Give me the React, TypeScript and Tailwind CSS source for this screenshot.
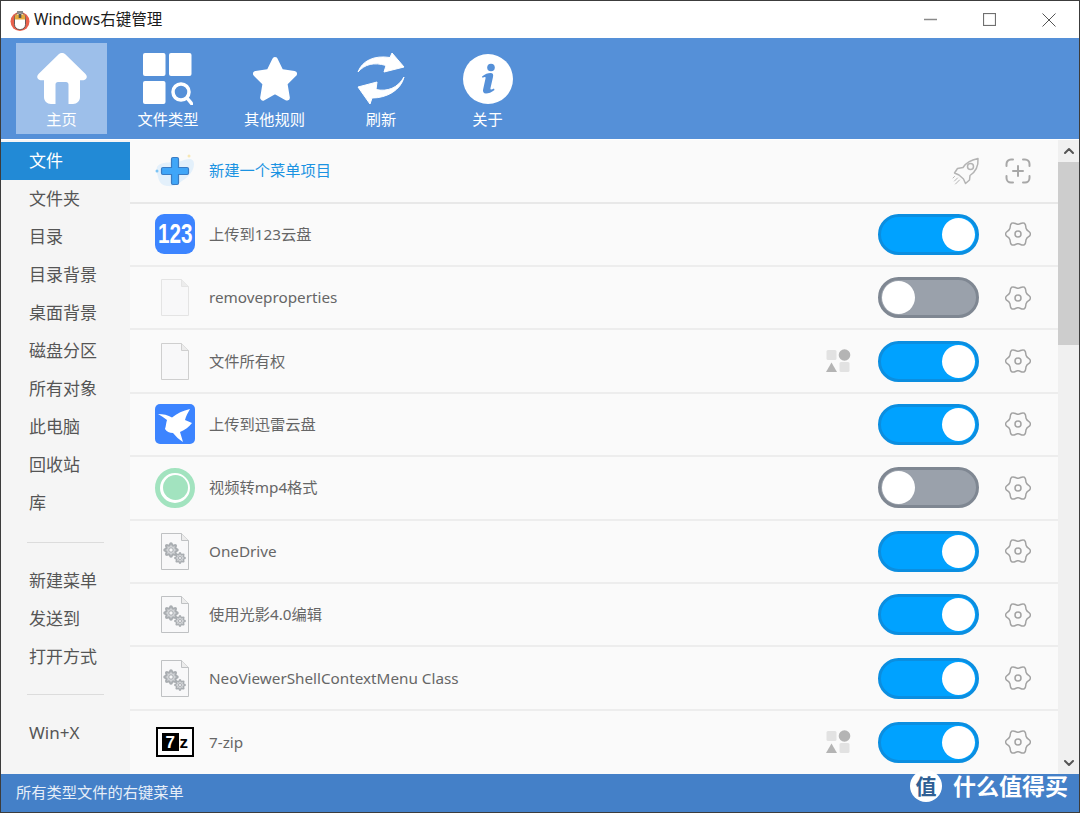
import { ChevronUp, ChevronDown } from "lucide-react";

const FONT = "font-['Noto_Sans','Noto_Sans_CJK_SC',sans-serif]";

const sideGroups = [
    ["文件", "文件夹", "目录", "目录背景", "桌面背景", "磁盘分区", "所有对象", "此电脑", "回收站", "库"],
    ["新建菜单", "发送到", "打开方式"],
    ["Win+X"],
];

type IconKind = "123" | "blank" | "blankDark" | "bird" | "ring" | "gears" | "7z";

type Row = { icon: IconKind; label: string; on: boolean; shapes?: boolean };

const rows: Row[] = [
    { icon: "123", label: "上传到123云盘", on: true },
    { icon: "blank", label: "removeproperties", on: false },
    { icon: "blankDark", label: "文件所有权", on: true, shapes: true },
    { icon: "bird", label: "上传到迅雷云盘", on: true },
    { icon: "ring", label: "视频转mp4格式", on: false },
    { icon: "gears", label: "OneDrive", on: true },
    { icon: "gears", label: "使用光影4.0编辑", on: true },
    { icon: "gears", label: "NeoViewerShellContextMenu Class", on: true },
    { icon: "7z", label: "7-zip", on: true, shapes: true },
];

// lobed outline shared by the settings icon and the small gears in the file icons
function gearPath(cx: number, cy: number, outer: number, inner: number, teeth: number) {
    const step = (Math.PI * 2) / teeth;
    const pt = (ang: number, r: number) => `${(cx + Math.cos(ang) * r).toFixed(2)} ${(cy + Math.sin(ang) * r).toFixed(2)}`;
    let d = "";
    for (let i = 0; i < teeth; i++) {
        const a = i * step;
        if (i === 0) d += `M${pt(a - step / 2, inner)}`;
        d += ` C${pt(a - step / 4, inner)} ${pt(a - step / 4, outer)} ${pt(a, outer)}`;
        d += ` C${pt(a + step / 4, outer)} ${pt(a + step / 4, inner)} ${pt(a + step / 2, inner)}`;
    }
    return d + "Z";
}

function HomeIcon() {
    return (
        <svg width="50" height="52" viewBox="0 0 50 52">
            <path fill="white" d="M25 0c1.500 0 2.800.7 3.800 1.700L48.500 21c2.600 2.600 1 6-2 6.200H43V44c0 4-3 7-7 7h-4.500V31.500c0-1.500-1-2.500-2.500-2.500h-8c-1.500 0-2.500 1-2.500 2.500V51H14c-4 0-7-3-7-7V27.200H3.500c-3 -.2-4.600-3.600-2-6.200L21.200 1.700C22.200.7 23.500 0 25 0z" />
        </svg>
    );
}

function TypesIcon() {
    return (
        <svg width="50" height="52" viewBox="0 0 50 52">
            <rect x="0" y="0" width="22.500" height="23" rx="2" fill="white" />
            <rect x="26" y="0" width="22.500" height="23" rx="2" fill="white" />
            <rect x="0" y="28" width="22.500" height="23" rx="2" fill="white" />
            <circle cx="38" cy="39" r="8" fill="none" stroke="white" strokeWidth="3.500" />
            <path d="M44 45l5 6" stroke="white" strokeWidth="3.500" strokeLinecap="round" />
        </svg>
    );
}

function StarIcon() {
    return (
        <svg width="44" height="46" viewBox="0 0 46 48">
            <path fill="white" stroke="white" strokeWidth="6" strokeLinejoin="round" d="M23 4l6 12.500 14 2-10 10 2.500 15L23 36.500 10.500 43.500l2.500-15-10-10 14-2z" />
        </svg>
    );
}

function RefreshIcon() {
    return (
        <svg width="48" height="54" viewBox="0 0 48 54">
            <g fill="white" stroke="white" strokeWidth="1" strokeLinejoin="round">
                <path d="M1 20C5 9 17 3 33 5.500L35 1 47 15 27 20 29 13.500C17 10 8 12 1 20z" />
                <path d="M47 25C44 38 30 46 15 46L13 52 1 35 20 30 19 37.500C30 40 41 36 47 25z" />
            </g>
        </svg>
    );
}

function InfoIcon() {
    return (
        <svg width="50" height="50" viewBox="0 0 50 50">
            <circle cx="25" cy="25" r="25" fill="white" />
            <circle cx="28" cy="13.500" r="3.800" fill="#5590d8" />
            <path fill="#5590d8" d="M19 22.500c3-2.500 6-3.500 8.500-3.500 2.500 0 3 1.500 2.500 4l-2.500 11c-.4 1.800.6 2 3.500.5l.5 1.500c-3 2.500-6 3.500-8.500 3.500-2.500 0-3.400-1.700-2.900-4l2.400-11c.4-1.800-.6-2-3-.7z" />
        </svg>
    );
}

const toolbar = [
    { label: "主页", icon: <HomeIcon />, active: true },
    { label: "文件类型", icon: <TypesIcon />, active: false },
    { label: "其他规则", icon: <StarIcon />, active: false },
    { label: "刷新", icon: <RefreshIcon />, active: false },
    { label: "关于", icon: <InfoIcon />, active: false },
];

function AppLogo() {
    return (
        <svg width="20" height="24" viewBox="0 0 20 24">
            <circle cx="10" cy="13.500" r="9.500" fill="#e8604c" />
            <rect x="4.500" y="5" width="11" height="16.500" rx="5" fill="white" stroke="#444" strokeWidth="0.800" />
            <path d="M4.800 11.500V9.500a4.500 4.500 0 0 1 1-3h8.400a4.500 4.500 0 0 1 1 3v2z" fill="#e6a93c" />
            <rect x="8.700" y="6" width="2.600" height="4" fill="#555" />
            <path d="M7 3h6v2.500H7z" fill="#8a8a8a" />
        </svg>
    );
}

function WindowControls() {
    return (
        <div className="flex items-center gap-[46px] pr-[23px]">
            <svg width="13" height="13" viewBox="0 0 13 13"><path d="M0 6.500h13" stroke="#8a8a8a" strokeWidth="1.500" /></svg>
            <svg width="13" height="13" viewBox="0 0 13 13"><rect x="0.500" y="0.500" width="12" height="12" fill="none" stroke="#707070" strokeWidth="1.200" /></svg>
            <svg width="14" height="14" viewBox="0 0 14 14"><path d="M.500.500l13 13M13.500.500l-13 13" stroke="#555" strokeWidth="1" /></svg>
        </div>
    );
}

function Toggle({ on }: { on: boolean }) {
    return (
        <div className={`flex h-[41px] w-[101px] items-center rounded-full border-[3px] px-[1px] ${on ? "justify-end border-[#0b8ee0] bg-[#00a2ff]" : "justify-start border-[#7f8792] bg-[#9aa1ab]"}`}>
            <div className="h-[33px] w-[33px] rounded-full bg-white" />
        </div>
    );
}

function GearButton() {
    return (
        <svg width="26" height="26" viewBox="0 0 26 26" fill="none" stroke="#a2a2a2" strokeWidth="1.500">
            <path d={gearPath(13, 13, 12.500, 9.800, 6)} strokeLinejoin="round" />
            <circle cx="13" cy="13" r="3" />
        </svg>
    );
}

function RocketIcon() {
    return (
        <svg width="28" height="28" viewBox="0 0 28 28" fill="none" stroke="#b4b4b4" strokeWidth="1.500" strokeLinejoin="round" strokeLinecap="round">
            <path d="M26 1.500C19 3 14 5.500 11 10.500l-5.500 1-3 4.500 4.500 2 4.500 4 2 4.500 4-3.500.5-4.500c6-4 8.500-10 8-17z" />
            <circle cx="18.500" cy="9.500" r="3" />
            <path d="M5.500 21l-3 3M7.500 23l-4 4M2.500 19.500L1 21" strokeWidth="1" />
        </svg>
    );
}

function ShapesIcon() {
    return (
        <svg width="25" height="24" viewBox="0 0 25 24">
            <rect x="0.500" y="1" width="10" height="10" rx="1.500" fill="#e2e2e2" />
            <circle cx="18.500" cy="6" r="5.800" fill="#b4b4b4" />
            <path d="M5.500 13.500l5.500 9.500H0z" fill="#b4b4b4" />
            <rect x="13.500" y="13" width="10" height="10" rx="1.500" fill="#e2e2e2" />
        </svg>
    );
}

function FileIcon({ stroke, gears }: { stroke: string; gears?: boolean }) {
    return (
        <svg width="28" height="37" viewBox="0 0 28 37">
            <path d="M.500.500h20l7 7v29H.500z" fill="#f8f8f9" stroke={stroke} />
            <path d="M20.500.500v7h7" fill="#ececec" stroke={stroke} />
            {gears && (
                <g fill="none" stroke="#a9adb1" strokeWidth="2">
                    <path d={gearPath(10, 17, 6.800, 4.800, 8)} fill="#d3d5d8" />
                    <circle cx="10" cy="17" r="2.200" fill="#f8f8f9" strokeWidth="1" />
                    <path d={gearPath(19, 25, 5.200, 3.600, 8)} fill="#d3d5d8" strokeWidth="1.500" />
                    <circle cx="19" cy="25" r="1.500" fill="#f8f8f9" strokeWidth="1" />
                </g>
            )}
        </svg>
    );
}

function RowIcon({ icon }: { icon: IconKind }) {
    if (icon === "123") {
        return (
            <div className="flex h-[40px] w-[40px] items-center justify-center rounded-[9px] bg-[#3c84ff] font-['Liberation_Sans',sans-serif] text-[28px] font-bold leading-none text-white">
                <span className="scale-x-[0.74]">123</span>
            </div>
        );
    }
    if (icon === "bird") {
        return (
            <svg width="40" height="40" viewBox="0 0 40 40">
                <rect width="40" height="40" rx="5" fill="#3c84ff" />
                <path fill="white" d="M3 10c5 0 10 1 14 3.500C22 9.500 28 6.500 35 5c-2 3.500-4 7-5 11l7 3c-3 4-7 7-12 9l3 10c-4-2.500-7-5.500-10-9-3.500 0-6.500-1.500-8-4 1-3 1-6 2-9C9 13.500 6 11.500 3 10z" />
            </svg>
        );
    }
    if (icon === "ring") {
        return (
            <div className="flex h-[40px] w-[40px] items-center justify-center rounded-full border-[5px] border-[#a2e3bf] bg-white">
                <div className="h-[25px] w-[25px] rounded-full bg-[#a2e3bf]" />
            </div>
        );
    }
    if (icon === "7z") {
        return (
            <div className="flex h-[30px] w-[38px] items-center gap-[1px] border-2 border-black bg-white px-[4px] font-['Liberation_Sans',sans-serif] text-[17px] font-bold leading-none">
                <span className="flex h-[18px] w-[18px] items-center justify-center bg-black text-white">7</span>
                <span className="text-black">z</span>
            </div>
        );
    }
    if (icon === "blank") return <FileIcon stroke="#e4e4e4" />;
    if (icon === "blankDark") return <FileIcon stroke="#cfcfcf" />;
    return <FileIcon stroke="#bfc1c3" gears />;
}

function NewItemIcon() {
    return (
        <svg width="40" height="40" viewBox="0 0 40 40">
            <path d="M2 16C7 9 19 13 29 9c6-2 10-1 10 4 0 6-4 11-9 15-5 3-9 8-17 7-6 0-9-4-10-9-1-4-2-7-1-10z" fill="#e3f0fb" />
            <circle cx="2" cy="20" r="1.500" fill="#7cc4f5" />
            <circle cx="34" cy="5" r="1.500" fill="#f7e7b5" />
            <path d="M16.500 8a1.500 1.500 0 0 1 1.500-1.500h4A1.500 1.500 0 0 1 23.500 8v8.500H32a1.500 1.500 0 0 1 1.500 1.500v4a1.500 1.500 0 0 1-1.500 1.500H23.500V32a1.500 1.500 0 0 1-1.500 1.500h-4a1.500 1.500 0 0 1-1.500-1.500V23.500H8A1.500 1.500 0 0 1 6.500 22v-4A1.500 1.500 0 0 1 8 16.500h8.500z" fill="#40a6f8" stroke="#3a7cc4" strokeWidth="1.200" />
        </svg>
    );
}

function ScanPlusIcon() {
    return (
        <svg width="26" height="26" viewBox="0 0 26 26" fill="none" stroke="#a8a8a8" strokeWidth="2" strokeLinecap="round">
            <path d="M1.500 8V6a4.500 4.500 0 0 1 4.500-4.500h2M18 1.500h2a4.500 4.500 0 0 1 4.500 4.500v2M24.500 18v2a4.500 4.500 0 0 1-4.500 4.500h-2M8 24.500H6A4.500 4.500 0 0 1 1.500 20v-2M13 8v10M8 13h10" />
        </svg>
    );
}

export default function App() {
    return (
        <div className={`relative flex h-[813px] w-[1080px] flex-col overflow-hidden border border-[#3c3c3c] bg-white ${FONT}`}>
            <header className="flex h-[37px] shrink-0 items-center justify-between bg-white">
                <div className="flex items-center gap-[4px] pl-[9px] text-[15.500px] text-[#1a1a1a]">
                    <AppLogo />
                    <span>Windows右键管理</span>
                </div>
                <WindowControls />
            </header>

            <nav className="flex h-[101px] shrink-0 gap-[15.500px] bg-[#5590d8] pl-[15px] pt-[5px]">
                {toolbar.map((item) => (
                    <div
                        key={item.label}
                        className={`flex h-[91px] w-[91px] flex-col items-center ${item.active ? "bg-[#9dbfea]" : ""}`}
                    >
                        <div className="flex h-[64px] items-center pt-[8px]">{item.icon}</div>
                        <span className="mt-[2px] text-[15.250px] leading-[20px] text-white">{item.label}</span>
                    </div>
                ))}
            </nav>

            <div className="flex min-h-0 flex-1 border-t border-white">
                <aside className="w-[129px] shrink-0 bg-[#f5f5f5] pt-[2px] text-[17px] text-[#555]">
                    {sideGroups.map((group, i) => (
                        <div key={i}>
                            {i > 0 && <div className={`mx-[26px] mb-[19px] h-px bg-[#dcdcdc] ${i === 1 ? "mt-[20px]" : "mt-[18px]"}`} />}
                            {group.map((name) => (
                                <div
                                    key={name}
                                    className={`flex h-[38px] items-center pl-[28px] ${name === "文件" ? "bg-[#228ad6] text-white" : ""}`}
                                >
                                    {name}
                                </div>
                            ))}
                        </div>
                    ))}
                </aside>

                <main className="flex min-w-0 flex-1 flex-col bg-[#fafafa]">
                    <div className="flex h-[63.600px] shrink-0 items-center border-b-2 border-[#e8e8e8] pl-[25px] pr-[27px]">
                        <NewItemIcon />
                        <span className="ml-[14px] flex-1 text-[15.250px] text-[#1b93e2]">新建一个菜单项目</span>
                        <div className="mr-[25px]"><RocketIcon /></div>
                        <ScanPlusIcon />
                    </div>
                    {rows.map((row) => (
                        <div key={row.label} className="flex h-[63.400px] shrink-0 items-center border-b-2 border-[#ededed] pr-[27px] last:border-b-0">
                            <div className="flex w-[79px] justify-center pl-[25px] pr-[14px]">
                                <RowIcon icon={row.icon} />
                            </div>
                            <span className="flex-1 text-[15.250px] text-[#666]">{row.label}</span>
                            {row.shapes && <div className="mr-[27px]"><ShapesIcon /></div>}
                            <Toggle on={row.on} />
                            <div className="ml-[26px]"><GearButton /></div>
                        </div>
                    ))}
                </main>

                <div className="flex w-[21px] shrink-0 flex-col bg-[#f0f0f0]">
                    <div className="flex h-[22px] items-center justify-center"><ChevronUp size={16} strokeWidth={3} className="text-[#555]" /></div>
                    <div className="h-[183px] bg-[#cdcdcd]" />
                    <div className="flex-1" />
                    <div className="flex h-[22px] items-center justify-center"><ChevronDown size={16} strokeWidth={3} className="text-[#555]" /></div>
                </div>
            </div>

            <footer className="flex h-[38px] shrink-0 items-center bg-[#4480c8] pb-[2px] pl-[15px] text-[15.250px] text-[#e6eef8]">
                所有类型文件的右键菜单
            </footer>

            <div className="absolute bottom-[10px] right-[11px] flex items-center gap-[11px]">
                <div className="flex h-[32px] w-[32px] items-center justify-center rounded-full bg-white text-[21px] font-bold leading-none text-[#2f5f94]">值</div>
                <span className="text-[23px] font-bold leading-[32px] text-white">什么值得买</span>
            </div>
        </div>
    );
}
